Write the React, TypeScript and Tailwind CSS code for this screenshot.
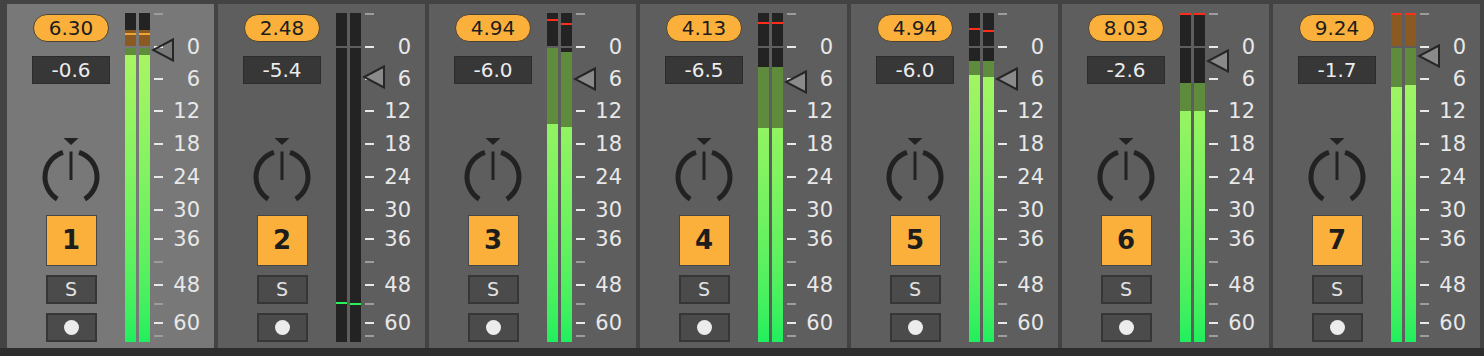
type Bar = {
  warn?: number
  hold?: number
  holdColor?: string
  black: number
  olive: number
  low?: number
}

type Strip = {
  peak: string
  vol: string
  tri: number
  num: number
  sel?: boolean
  bars: [Bar, Bar]
}

const RED = '#ff2d1c'

const strips: Strip[] = [
  {
    peak: '6.30', vol: '-0.6', tri: 46, num: 1, sel: true,
    bars: [
      { warn: 17, hold: 20, holdColor: '#f0a431', black: 0, olive: 7 },
      { warn: 17, hold: 20, holdColor: '#f0a431', black: 0, olive: 7 },
    ],
  },
  {
    peak: '2.48', vol: '-5.4', tri: 73, num: 2,
    bars: [
      { black: 294, olive: 0, low: 254 },
      { black: 294, olive: 0, low: 255 },
    ],
  },
  {
    peak: '4.94', vol: '-6.0', tri: 75, num: 3,
    bars: [
      { hold: 6, holdColor: RED, black: 0, olive: 76 },
      { hold: 10, holdColor: RED, black: 4, olive: 75 },
    ],
  },
  {
    peak: '4.13', vol: '-6.5', tri: 78, num: 4,
    bars: [
      { hold: 9, holdColor: RED, black: 19, olive: 61 },
      { hold: 9, holdColor: RED, black: 19, olive: 61 },
    ],
  },
  {
    peak: '4.94', vol: '-6.0', tri: 75, num: 5,
    bars: [
      { hold: 15, holdColor: RED, black: 13, olive: 14 },
      { hold: 17, holdColor: RED, black: 13, olive: 16 },
    ],
  },
  {
    peak: '8.03', vol: '-2.6', tri: 57, num: 6,
    bars: [
      { hold: 0, holdColor: RED, black: 35, olive: 28 },
      { hold: 0, holdColor: RED, black: 35, olive: 28 },
    ],
  },
  {
    peak: '9.24', vol: '-1.7', tri: 52, num: 7,
    bars: [
      { warn: 2, hold: 0, holdColor: RED, black: 0, olive: 39 },
      { warn: 2, hold: 0, holdColor: RED, black: 0, olive: 37 },
    ],
  },
]

const major = [
  { y: 43, t: '0' },
  { y: 75, t: '6' },
  { y: 107, t: '12' },
  { y: 140, t: '18' },
  { y: 173, t: '24' },
  { y: 206, t: '30' },
  { y: 235, t: '36' },
  { y: 281, t: '48' },
  { y: 319, t: '60' },
]
const minor = [10, 258, 300, 332]

function MeterBar({ b }: { b: Bar }) {
  return (
    <div className="flex w-[11px] flex-col">
      <div className="relative flex h-[33px] flex-col bg-[#232323]">
        {b.warn !== undefined && (
          <>
            <div style={{ height: b.warn }} />
            <div className="flex-1 bg-[#8a5a22]" />
          </>
        )}
        {b.hold !== undefined && (
          <div className="absolute left-0 right-0 h-[2px]" style={{ top: b.hold, background: b.holdColor }} />
        )}
      </div>
      <div className="h-[2px]" />
      <div className="relative flex flex-1 flex-col bg-linear-to-b from-[#aaf563] to-[#1eef5e]">
        <div className="bg-[#232323]" style={{ height: b.black }} />
        <div className="bg-[#5e8c3c]" style={{ height: b.olive }} />
        {b.low !== undefined && (
          <div className="absolute left-0 right-0 h-[2px] bg-[#2bf05a]" style={{ top: b.low }} />
        )}
      </div>
    </div>
  )
}

function Knob() {
  return (
    <svg width="64" height="68" viewBox="0 0 64 68" className="mt-[54px]">
      <polygon points="24.5,0 39.5,0 32,7" fill="#222" />
      <path d="M40.03 14.27 A26 26 0 0 1 45.78 61.05" fill="none" stroke="#222" strokeWidth="5" />
      <path d="M23.97 14.27 A26 26 0 0 0 18.22 61.05" fill="none" stroke="#222" strokeWidth="5" />
      <line x1="32" y1="13.5" x2="32" y2="42" stroke="#222" strokeWidth="3" />
    </svg>
  )
}

function ChannelStrip({ s }: { s: Strip }) {
  return (
    <div className={`flex h-[344px] w-[207px] items-start ${s.sel ? 'bg-[#787878]' : 'bg-[#5e5e5e]'}`}>
      <div className="flex w-[116px] flex-col items-center pl-3">
        <div className="mt-[10px] flex h-[28px] w-[76px] items-center justify-center rounded-full border border-[#4a4436] bg-[#fbb03b] text-[20px] text-[#1d1d1d]">
          {s.peak}
        </div>
        <div className="mt-[14px] flex h-[28px] w-[78px] items-center justify-center border border-[#2c2c2c] bg-[#373737] text-[20px] text-[#ececec]">
          {s.vol}
        </div>
        <Knob />
        <div className="mt-[9px] flex h-[51px] w-[51px] items-center justify-center border border-[#464646] bg-[#fbb03b] text-[26px] font-bold text-[#1d1d1d]">
          {s.num}
        </div>
        <div className="mt-[9px] flex h-[29px] w-[51px] items-center justify-center border-2 border-[#363636] bg-[#4b4b4b] text-[19px] text-[#e2e2e2]">
          S
        </div>
        <div className="mt-[9px] flex h-[29px] w-[51px] items-center justify-center border-2 border-[#363636] bg-[#4b4b4b]">
          <div className="h-[15px] w-[15px] rounded-full bg-[#ececec]" />
        </div>
      </div>
      <div className="ml-[2px] mt-[9px] flex h-[329px] gap-[3px]">
        <MeterBar b={s.bars[0]} />
        <MeterBar b={s.bars[1]} />
      </div>
      <div className="relative h-full flex-1">
        {minor.map((y) => (
          <div key={y} className="absolute left-[4px] h-[2px] w-[9px] bg-[#9c9c9c]" style={{ top: y - 1 }} />
        ))}
        {major.map((m) => (
          <div key={m.t}>
            <div className="absolute left-[4px] h-[2px] w-[9px] bg-[#e8e8e8]" style={{ top: m.y - 1 }} />
            <div className="absolute right-[14px] text-[21px] leading-[20px] text-[#e8e8e8]" style={{ top: m.y - 10 }}>
              {m.t}
            </div>
          </div>
        ))}
        <svg width="24" height="24" viewBox="0 0 24 24" className="absolute left-[1px]" style={{ top: s.tri - 12 }}>
          <polygon points="22,1.5 2,12 22,22.5" fill={s.sel ? 'none' : '#8a8a8a'} stroke="#262626" strokeWidth="2" />
        </svg>
      </div>
    </div>
  )
}

export default function App() {
  return (
    <div className="flex h-[356px] w-[1484px] flex-col bg-[#434343] font-['DejaVu_Sans',sans-serif]">
      <div className="flex h-[348px] gap-1 pl-[7px] pt-1">
        {strips.map((s) => (
          <ChannelStrip key={s.num} s={s} />
        ))}
      </div>
      <div className="h-2 bg-[#2d2d2d]" />
    </div>
  )
}
